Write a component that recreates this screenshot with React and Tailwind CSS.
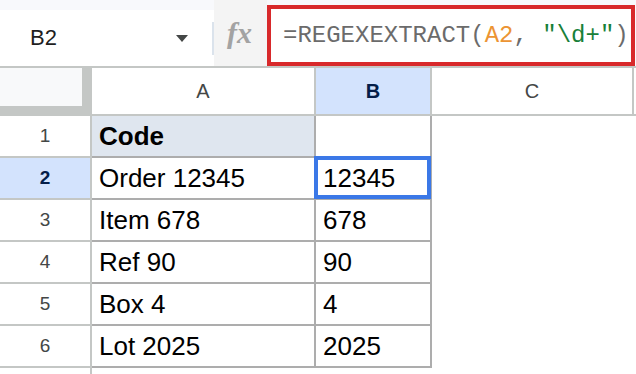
export default function App() {
  const rows = [
    { n: 1, a: "Code", b: "" },
    { n: 2, a: "Order 12345", b: "12345" },
    { n: 3, a: "Item 678", b: "678" },
    { n: 4, a: "Ref 90", b: "90" },
    { n: 5, a: "Box 4", b: "4" },
    { n: 6, a: "Lot 2025", b: "2025" },
  ];
  return (
    <div className="w-[636px] h-[374px] overflow-hidden bg-white flex flex-col font-['Liberation_Sans',Arial,sans-serif]">
      {/* toolbar */}
      <div className="flex h-[66px] shrink-0 bg-[#f8f9fc]">
        <div className="w-[214px] flex flex-col">
          <div className="h-[10px] shrink-0" />
          <div className="flex-1 bg-white flex items-center">
            <span className="ml-[30px] text-[22px] leading-none text-[#1f1f1f]">B2</span>
            <svg className="ml-auto mr-[24px]" width="12" height="7" viewBox="0 0 12 7">
              <polygon points="0,0 12,0 6,7" fill="#444746" />
            </svg>
            <div className="w-[2px] h-[33px] bg-[#dbe3ec]" />
          </div>
        </div>
        <div className="w-[53px] bg-[#f4f4f4] flex items-center justify-center">
          <span className="font-['Liberation_Serif',serif] italic font-bold text-[30px] leading-none text-[#a3a3a3] pr-[2px]">fx</span>
        </div>
        <div className="w-[368px] mt-[5px] h-[61px] border-4 border-[#d8292b] bg-white flex items-center pl-[12px] font-['Liberation_Mono',monospace] text-[24px] leading-none text-[#6b6b6b] whitespace-pre">
          <span>=REGEXEXTRACT(</span>
          <span className="text-[#ec9433]">A2</span>
          <span>, </span>
          <span className="text-[#188038]">"\d+"</span>
          <span>)</span>
        </div>
      </div>

      {/* column header */}
      <div className="flex shrink-0 border-t-2 border-[#c4c7c5] h-[50px]">
        <div className="w-[92px] h-[48px] bg-[#c4c7c5]">
          <div className="w-[82px] h-[38px] bg-[#f8f9fa]" />
        </div>
        <div className="w-[224px] h-[48px] border-r-2 border-b-2 border-[#c4c7c5] flex items-center justify-center text-[20px] text-[#444746]">A</div>
        <div className="w-[116px] h-[48px] border-r-2 border-b-2 border-[#c4c7c5] bg-[#d3e3fd] flex items-center justify-center text-[20px] font-bold text-[#041e49]">B</div>
        <div className="w-[202px] h-[48px] border-r-2 border-b-2 border-[#c4c7c5] flex items-center justify-center text-[20px] text-[#444746]">C</div>
        <div className="flex-1 h-[48px] border-b-2 border-[#c4c7c5]" />
      </div>

      {/* rows */}
      {rows.map((r) => (
        <div key={r.n} className="flex h-[42px] shrink-0">
          <div
            className={
              r.n === 2
                ? "w-[92px] border-r-2 border-b-2 border-[#c4c7c5] bg-[#d3e3fd] flex items-center justify-center text-[19px] font-bold text-[#041e49]"
                : "w-[92px] border-r-2 border-b-2 border-[#c4c7c5] flex items-center justify-center text-[19px] text-[#444746]"
            }
          >
            {r.n}
          </div>
          <div
            className={
              r.n === 1
                ? "w-[224px] border-r-2 border-b-2 border-[#adadad] bg-[#dfe6ef] flex items-center pl-[7px] text-[26px] leading-none font-bold text-black"
                : "w-[224px] border-r-2 border-b-2 border-[#adadad] flex items-center pl-[7px] text-[26px] leading-none text-black"
            }
          >
            {r.a}
          </div>
          <div className="relative w-[116px] border-r-2 border-b-2 border-[#adadad] flex items-center pl-[7px] text-[26px] leading-none text-black">
            {r.b}
            {r.n === 2 && (
              <div className="absolute -left-[2px] -top-[2px] w-[117px] h-[43px] border-4 border-[#3b78e7]" />
            )}
          </div>
          <div className="flex-1" />
        </div>
      ))}
      <div className="flex flex-1">
        <div className="w-[92px] border-r-2 border-[#c4c7c5]" />
      </div>
    </div>
  );
}
